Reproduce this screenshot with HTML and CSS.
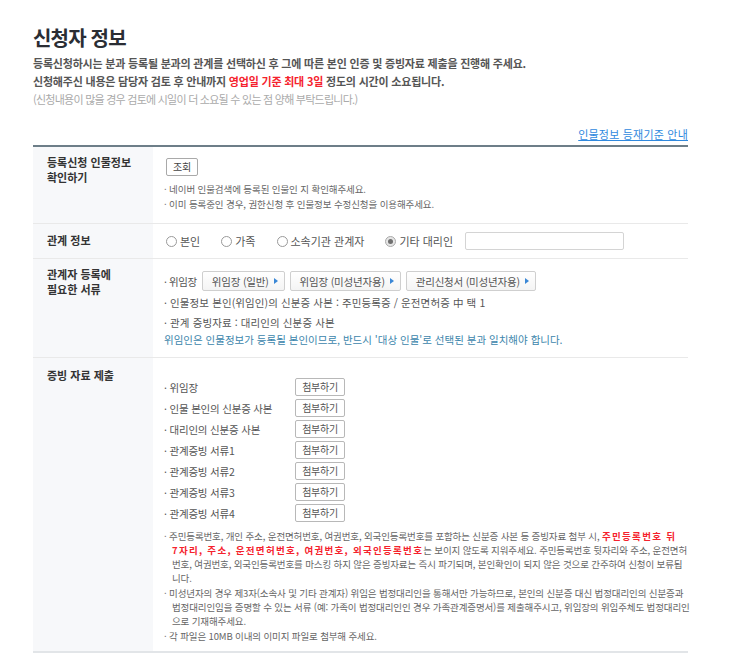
FILE: index.html
```html
<!DOCTYPE html>
<html lang="ko">
<head>
<meta charset="utf-8">
<title>신청자 정보</title>
<link rel="stylesheet" href="styles.css">
</head>
<body>
<div class="page">
  <h1 class="title">신청자 정보</h1>
  <p class="desc">등록신청하시는 분과 등록될 분과의 관계를 선택하신 후 그에 따른 본인 인증 및 증빙자료 제출을 진행해 주세요.</p>
  <p class="desc">신청해주신 내용은 담당자 검토 후 안내까지 <span class="red">영업일 기준 최대 3일</span> 정도의 시간이 소요됩니다.</p>
  <p class="desc sub">(신청내용이 많을 경우 검토에 시일이 더 소요될 수 있는 점 양해 부탁드립니다.)</p>
  <div class="guide"><a href="#">인물정보 등재기준 안내</a></div>

  <div class="form">
    <div class="row">
      <div class="th">등록신청 인물정보<br>확인하기</div>
      <div class="td td-check">
        <button class="btn btn-search" type="button">조회</button>
        <ul class="small-list">
          <li>· 네이버 인물검색에 등록된 인물인 지 확인해주세요.</li>
          <li>· 이미 등록중인 경우, 권한신청 후 인물정보 수정신청을 이용해주세요.</li>
        </ul>
      </div>
    </div>

    <div class="row">
      <div class="th th-mid">관계 정보</div>
      <div class="td td-relation">
        <label class="opt"><span class="radio"></span>본인</label>
        <label class="opt"><span class="radio"></span>가족</label>
        <label class="opt"><span class="radio"></span>소속기관 관계자</label>
        <label class="opt opt-last"><span class="radio checked"></span>기타 대리인</label>
        <input class="text-input" type="text">
      </div>
    </div>

    <div class="row">
      <div class="th">관계자 등록에<br>필요한 서류</div>
      <div class="td td-docs">
        <div class="doc-line">
          <span class="doc-name">· 위임장</span>
          <button class="btn-doc" type="button">위임장 (일반)<i class="tri"></i></button>
          <button class="btn-doc" type="button">위임장 (미성년자용)<i class="tri"></i></button>
          <button class="btn-doc" type="button">관리신청서 (미성년자용)<i class="tri"></i></button>
        </div>
        <p class="doc-text first">· 인물정보 본인(위임인)의 신분증 사본 : 주민등록증 / 운전면허증 中 택 1</p>
        <p class="doc-text gap">· 관계 증빙자료 : 대리인의 신분증 사본</p>
        <p class="doc-text teal">위임인은 인물정보가 등록될 본인이므로, 반드시 '대상 인물'로 선택된 분과 일치해야 합니다.</p>
      </div>
    </div>

    <div class="row row-last">
      <div class="th th-files">증빙 자료 제출</div>
      <div class="td td-files">
        <ul class="file-list">
          <li><span class="file-name">· 위임장</span><button class="btn btn-attach" type="button">첨부하기</button></li>
          <li><span class="file-name">· 인물 본인의 신분증 사본</span><button class="btn btn-attach" type="button">첨부하기</button></li>
          <li><span class="file-name">· 대리인의 신분증 사본</span><button class="btn btn-attach" type="button">첨부하기</button></li>
          <li><span class="file-name">· 관계증빙 서류1</span><button class="btn btn-attach" type="button">첨부하기</button></li>
          <li><span class="file-name">· 관계증빙 서류2</span><button class="btn btn-attach" type="button">첨부하기</button></li>
          <li><span class="file-name">· 관계증빙 서류3</span><button class="btn btn-attach" type="button">첨부하기</button></li>
          <li><span class="file-name">· 관계증빙 서류4</span><button class="btn btn-attach" type="button">첨부하기</button></li>
        </ul>
        <ul class="notes">
          <li>· 주민등록번호, 개인 주소, 운전면허번호, 여권번호, 외국인등록번호를 포함하는 신분증 사본 등 증빙자료 첨부 시, <b class="warn">주민등록번호 뒤</b><br><b class="warn">7자리, 주소, 운전면허번호, 여권번호, 외국인등록번호</b>는 보이지 않도록 지워주세요. 주민등록번호 뒷자리와 주소, 운전면허<br>번호, 여권번호, 외국인등록번호를 마스킹 하지 않은 증빙자료는 즉시 파기되며, 본인확인이 되지 않은 것으로 간주하여 신청이 보류됩<br>니다.</li>
          <li>· 미성년자의 경우 제3자(소속사 및 기타 관계자) 위임은 법정대리인을 통해서만 가능하므로, 본인의 신분증 대신 법정대리인의 신분증과<br>법정대리인임을 증명할 수 있는 서류 (예: 가족이 법정대리인인 경우 가족관계증명서)를 제출해주시고, 위임장의 위임주체도 법정대리인<br>으로 기재해주세요.</li>
          <li>· 각 파일은 10MB 이내의 이미지 파일로 첨부해 주세요.</li>
        </ul>
      </div>
    </div>
  </div>
</div>
</body>
</html>
```

FILE: styles.css
```css
* { box-sizing: border-box; }

body {
  margin: 0;
  background: #fff;
  font-family: "Noto Sans CJK KR", "Noto Sans", sans-serif;
  color: #555;
}

.page {
  width: 688px;
  padding-left: 33px;
}

.title {
  margin: 26px 0 4px;
  font-size: 20px;
  line-height: 24px;
  font-weight: 700;
  color: #2a2d34;
  letter-spacing: -0.8px;
}

.desc {
  margin: 0;
  font-size: 11px;
  line-height: 18px;
  font-weight: 700;
  color: #555;
  letter-spacing: -0.2px;
}

.desc .red { color: #f5222d; }

.desc.sub {
  color: #aaa;
  font-weight: 400;
  letter-spacing: -0.75px;
}

.guide {
  margin-top: 19px;
  text-align: right;
  font-size: 11px;
  line-height: 14px;
  letter-spacing: 0.2px;
}

.guide a {
  color: #2f89de;
  text-decoration: underline;
}

.form {
  margin-top: 4px;
  border-top: 2px solid #6d7e88;
  border-bottom: 2px solid #e2e5e8;
}

.row {
  display: grid;
  grid-template-columns: 120px 1fr;
  border-bottom: 1px solid #e9e9e9;
}

.row-last { border-bottom: 0; }

.th {
  background: #f7f8fa;
  padding: 8px 0 0 14px;
  font-size: 11px;
  line-height: 15px;
  font-weight: 700;
  color: #333;
  letter-spacing: 0;
}

.th-mid { padding-top: 9px; }
.th-files { padding-top: 10px; }

.td {
  padding-left: 11px;
}

.btn {
  display: block;
  height: 18px;
  padding: 0;
  background: #fff;
  border: 1px solid #a9a9a9;
  border-radius: 2px;
  font-family: inherit;
  font-size: 10px;
  line-height: 16px;
  color: #444;
  letter-spacing: -0.3px;
}

.td-check { padding-top: 11px; padding-bottom: 11px; }

.btn-search {
  width: 32px;
  margin-left: 2px;
}

.small-list {
  list-style: none;
  margin: 6px 0 0;
  padding: 0;
  font-size: 9.5px;
  line-height: 15px;
  color: #666;
  letter-spacing: -0.1px;
}

.td-relation {
  display: flex;
  align-items: center;
  padding-top: 8px;
  padding-bottom: 8px;
  padding-left: 13px;
  font-size: 11px;
  color: #555;
}

.opt {
  display: flex;
  align-items: center;
  margin-right: 21px;
  line-height: 18px;
}

.opt-last { margin-right: 12px; }

.radio {
  display: inline-block;
  width: 11px;
  height: 11px;
  margin-right: 3px;
  border: 1px solid #9a9a9a;
  border-radius: 50%;
  background: #fff;
  position: relative;
}

.radio.checked::after {
  content: "";
  position: absolute;
  left: 2px;
  top: 2px;
  width: 5px;
  height: 5px;
  border-radius: 50%;
  background: #6f6f6f;
}

.radio.checked {
  border-color: #aaa;
  background: #e6e6e6;
}

.text-input {
  width: 159px;
  height: 18px;
  border: 1px solid #d4d4d4;
  border-radius: 2px;
  background: #fff;
}

.td-docs {
  padding-top: 12px;
  padding-bottom: 10px;
  font-size: 10.5px;
  color: #555;
}

.doc-line {
  display: flex;
  align-items: center;
  height: 20px;
}

.doc-name {
  margin-right: 5px;
  letter-spacing: -0.4px;
}

.btn-doc {
  display: inline-flex;
  align-items: center;
  height: 20px;
  margin-right: 5px;
  padding: 0 6px 0 9px;
  border: 1px solid #cfcfcf;
  border-radius: 2px;
  background: linear-gradient(#ffffff, #f4f4f4);
  font-family: inherit;
  font-size: 10.5px;
  color: #555;
  letter-spacing: -0.2px;
}

.tri {
  display: inline-block;
  width: 0;
  height: 0;
  margin-left: 5px;
  border-left: 4px solid #3a87d6;
  border-top: 3px solid transparent;
  border-bottom: 3px solid transparent;
}

.doc-text {
  margin: 2px 0 0;
  line-height: 15px;
  letter-spacing: 0.1px;
}

.doc-text.first { margin-top: 4px; }
.doc-text.gap { margin-top: 5px; }

.doc-text.teal {
  color: #3c86ac;
  font-size: 10.5px;
  letter-spacing: 0;
}

.td-files {
  padding-top: 20px;
  padding-bottom: 8px;
}

.file-list {
  list-style: none;
  margin: 0;
  padding: 0;
  display: flex;
  flex-direction: column;
  gap: 3px;
}

.file-list li {
  display: grid;
  grid-template-columns: 131px 50px;
  align-items: center;
  height: 18px;
  font-size: 10.5px;
  color: #555;
  letter-spacing: -0.2px;
}

.btn-attach {
  width: 50px;
  border-color: #b8b8b8;
  color: #555;
}

.notes {
  list-style: none;
  margin: 7px 0 0;
  padding: 0;
  font-size: 9.5px;
  line-height: 14px;
  color: #666;
  letter-spacing: -0.13px;
  white-space: nowrap;
}

.notes li {
  padding-left: 8px;
  text-indent: -8px;
}

.notes li + li { margin-top: 1px; }

.warn {
  color: #f5222d;
  font-weight: 700;
  letter-spacing: 1.3px;
}
```
